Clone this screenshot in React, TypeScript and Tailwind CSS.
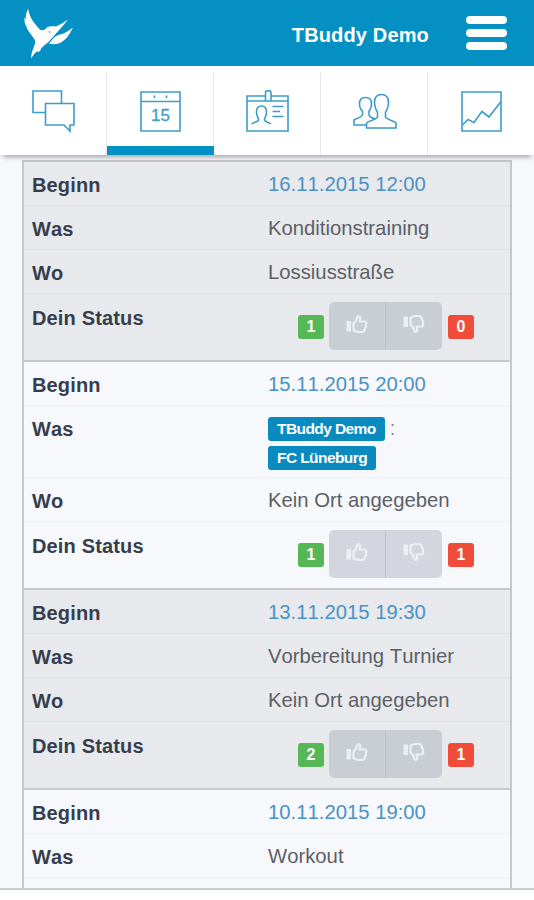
import { ReactNode } from 'react';
import clsx from 'clsx';

interface TeamEvent {
  id: number;
  begin: string;
  what?: string;
  teams?: string[];
  where?: string;
  votes?: { yes: number; no: number };
}

const events: TeamEvent[] = [
  { id: 1, begin: '16.11.2015 12:00', what: 'Konditionstraining', where: 'Lossiusstraße', votes: { yes: 1, no: 0 } },
  { id: 2, begin: '15.11.2015 20:00', teams: ['TBuddy Demo', 'FC Lüneburg'], where: 'Kein Ort angegeben', votes: { yes: 1, no: 1 } },
  { id: 3, begin: '13.11.2015 19:30', what: 'Vorbereitung Turnier', where: 'Kein Ort angegeben', votes: { yes: 2, no: 1 } },
  { id: 4, begin: '10.11.2015 19:00', what: 'Workout' },
];

const BirdLogo = () => (
  <svg width="52" height="50" viewBox="22 8.500 52 50" fill="#fff" className="ml-[22px]">
    <path d="M28 9 C30 18 32 21 38 28 C41 32 44 31 46 29 C48 26 53 27 56 27 C60 25 64 23 68 20 C61 29 54 36 48 43 C45 45 43 47 41 49 C41 51 39 53 37 52 C35 53 33 56 31 59 C31 53 34 48 35 44 C36 41 34 39 31 35 C29 32 27 30 26 26 C24 23 25 21 24 18 L26 20 C25 16 27 13 28 9 Z" />
    <path d="M49 44 C53 39 55 36 60 35 C65 34 69 31 73 28 C69 36 66 40 61 43 C57 45 53 45 49 44 Z" />
    <circle cx="49.500" cy="32.500" r="1" fill="#6fbcdc" />
  </svg>
);

const ThumbIcon = ({ className }: { className?: string }) => (
  <svg width="22" height="20" viewBox="0 0 22 20" className={className}>
    <path d="M0.500 7H5V17.500H0.500Z" fill="currentColor" />
    <path
      d="M7.500 9.500L9.500 7.500L11.500 3C12 1.500 14.500 2 14.300 4L13.500 7.500H19C20.500 8 20.500 10 19.800 10.800C20.300 12 20 13.500 19 14.200C19 16 18 17.500 16.500 18H12L7.500 16.500Z"
      fill="none"
      stroke="currentColor"
      strokeWidth="2.200"
      strokeLinejoin="round"
    />
  </svg>
);

const ChatIcon = () => (
  <>
    <path d="M45 112.500H33V91H61.500V103.500" />
    <path d="M45.500 103.500H74V125H70V131L64 125H45.500Z" />
  </>
);

const CalendarIcon = () => (
  <>
    <path d="M34 92H73V131H34ZM34 101.500H73" />
    <path d="M47.500 95.500v2.500M59.500 95.500v2.500" />
    <text x="53.500" y="121" textAnchor="middle" fill="#3b9dc9" stroke="#3b9dc9" strokeWidth=".3" className="font-['Liberation_Sans'] text-[17px] [font-kerning:none]">15</text>
  </>
);

const BadgeIcon = () => (
  <>
    <path d="M51.500 96H33V131H74V96H57M33 101H74" />
    <path d="M51.500 101V92.500C51.500 90 57 90 57 92.500V101" />
    <path d="M37.500 124C40 122 44 122 44.500 120C45 118 42.500 117 42.500 112C42.500 107 45 106 47.500 106C50.500 106 52.500 108 52.500 112C52.500 117 50 118 50.500 120C51 122 55 122 57 124" />
    <path d="M58.500 106.500H69.500M58.500 111.500H66M58.500 116.500H69.500" />
  </>
);

const UsersIcon = () => (
  <>
    <path d="M45.500 128V123C49 120 55 120 56.500 117V112C54.500 110 54 107 53.500 103C53 97 56.500 94.500 60.500 94.500C64.500 94.500 68 97 67.500 103C67 107 66.500 110 64.500 112V117C66 120 72 120 75 123V128Z" />
    <path d="M45.500 125H33V120C36 118 40 118 41.500 115V111C39.500 109.500 38.500 107 38.500 103.500C38.500 99.500 41 97.500 44.500 97.500C48 97.500 50.500 99.500 50.500 103.500C50.500 107 49.500 109.500 48 111V115C49 118 52 118 54.500 119" />
  </>
);

const ChartIcon = () => (
  <>
    <path d="M34 92H73V131H34Z" />
    <path d="M34.500 125L40 119.500L46 122.500L54 111.500L61 117L73 101.500" />
  </>
);

// all tab icons share one drawing area
const tabs: { id: string; icon: ReactNode }[] = [
  { id: 'messages', icon: <ChatIcon /> },
  { id: 'events', icon: <CalendarIcon /> },
  { id: 'profile', icon: <BadgeIcon /> },
  { id: 'team', icon: <UsersIcon /> },
  { id: 'stats', icon: <ChartIcon /> },
];

function Header() {
  return (
    <header className="flex h-[66px] shrink-0 items-center bg-[#0490c3]">
      <BirdLogo />
      <span className="ml-auto mr-[37px] mt-1 text-[20px] font-bold leading-6 tracking-[0.150px] text-white">
        TBuddy Demo
      </span>
      <button className="mr-[27px] flex w-[41px] flex-col gap-[5px]">
        <span className="h-2 rounded bg-white" />
        <span className="h-2 rounded bg-white" />
        <span className="h-2 rounded bg-white" />
      </button>
    </header>
  );
}

function TabBar({ active }: { active: string }) {
  return (
    <nav className="relative z-10 flex h-[89px] shrink-0 bg-white shadow-[0_5px_5px_-3px_rgba(0,0,0,0.35)]">
      {tabs.map((tab) => (
        <button key={tab.id} className="flex flex-1 flex-col">
          <span className="mt-1.5 flex w-full flex-1 items-start border-r border-[#e4e6e8]">
            <svg width="106" height="70" viewBox="0 72 106 70" fill="none" stroke="#3b9dc9" strokeWidth="1.600">
              {tab.icon}
            </svg>
          </span>
          {tab.id === active && <span className="h-[9px] w-full bg-[#0490c3]" />}
        </button>
      ))}
    </nav>
  );
}

function Label({ children }: { children: ReactNode }) {
  return (
    <div className="w-[236px] text-[20px] font-bold leading-6 tracking-[0.150px] text-[#363e4e] [font-kerning:none]">
      {children}
    </div>
  );
}

function Row({ label, children, className }: { label: string; children: ReactNode; className?: string }) {
  return (
    <div className={clsx('flex border-b border-black/[0.025] px-2 pt-[11px]', className)}>
      <Label>{label}</Label>
      <div className="flex-1 text-[20.300px] leading-[23px] text-[#5c5f66] [font-kerning:none]">{children}</div>
    </div>
  );
}

function Count({ value, className }: { value: number; className: string }) {
  return (
    <span className={clsx('flex h-6 w-[26px] items-center justify-center rounded-[3px] text-[16px] font-bold text-white', className)}>
      {value}
    </span>
  );
}

function TeamLabel({ name }: { name: string }) {
  return (
    <span className="inline-block h-6 whitespace-nowrap rounded-[3px] bg-[#0a8bbf] px-[9px] text-[15.500px] font-bold leading-6 tracking-[-0.580px] text-white">
      {name}
    </span>
  );
}

function EventCard({ event, odd }: { event: TeamEvent; odd: boolean }) {
  return (
    <section className={clsx(odd ? 'bg-[#e7e9ec]' : 'bg-[#f6f8fc]', event.votes && 'border-b-2 border-[#c6c8ca]')}>
      <Row label="Beginn" className="h-11">
        <span className="text-[#4b92c4]">{event.begin}</span>
      </Row>
      <Row label="Was" className={event.teams ? 'h-[72px]' : 'h-11'}>
        {event.teams ? (
          <div className="flex flex-col items-start gap-[5px]">
            <div className="flex gap-[5px]">
              <TeamLabel name={event.teams[0]} />
              <span className="text-[#8b8e94]">:</span>
            </div>
            <TeamLabel name={event.teams[1]} />
          </div>
        ) : (
          event.what
        )}
      </Row>
      {event.where && (
        <Row label="Wo" className="h-11">
          {event.where}
        </Row>
      )}
      {event.votes && (
        <div className="flex h-[66px] px-2">
          <div className="pt-3">
            <Label>Dein Status</Label>
          </div>
          <div className="flex items-center pl-[30px]">
            <Count value={event.votes.yes} className="bg-[#56b757]" />
            <div className={clsx('mb-0.5 ml-[5px] mr-1.5 flex h-12 w-[113px] overflow-hidden rounded-[5px]', odd ? 'bg-[#c9ced5]' : 'bg-[#d3d6de]')}>
              <button className="flex flex-1 items-center justify-center border-r border-[#bcc1c8] pb-1 text-[#edf0f3]">
                <ThumbIcon />
              </button>
              <button className="flex flex-1 items-center justify-center pb-1 text-[#edf0f3]">
                <ThumbIcon className="-scale-y-100" />
              </button>
            </div>
            <Count value={event.votes.no} className="bg-[#f14b39]" />
          </div>
        </div>
      )}
    </section>
  );
}

export default function App() {
  return (
    <div className="h-[900px] overflow-hidden bg-white font-['Liberation_Sans',sans-serif]">
      <div className="flex h-[890px] flex-col overflow-hidden border-b-2 border-[#cbcdcf] bg-[#f6f8fc]">
        <Header />
        <TabBar active="events" />
        <main className="mx-[22px] mt-[5px] flex-1 border-x-2 border-t-2 border-[#c6c8ca]">
          {events.map((event, i) => (
            <EventCard key={event.id} event={event} odd={i % 2 === 0} />
          ))}
        </main>
      </div>
    </div>
  );
}
